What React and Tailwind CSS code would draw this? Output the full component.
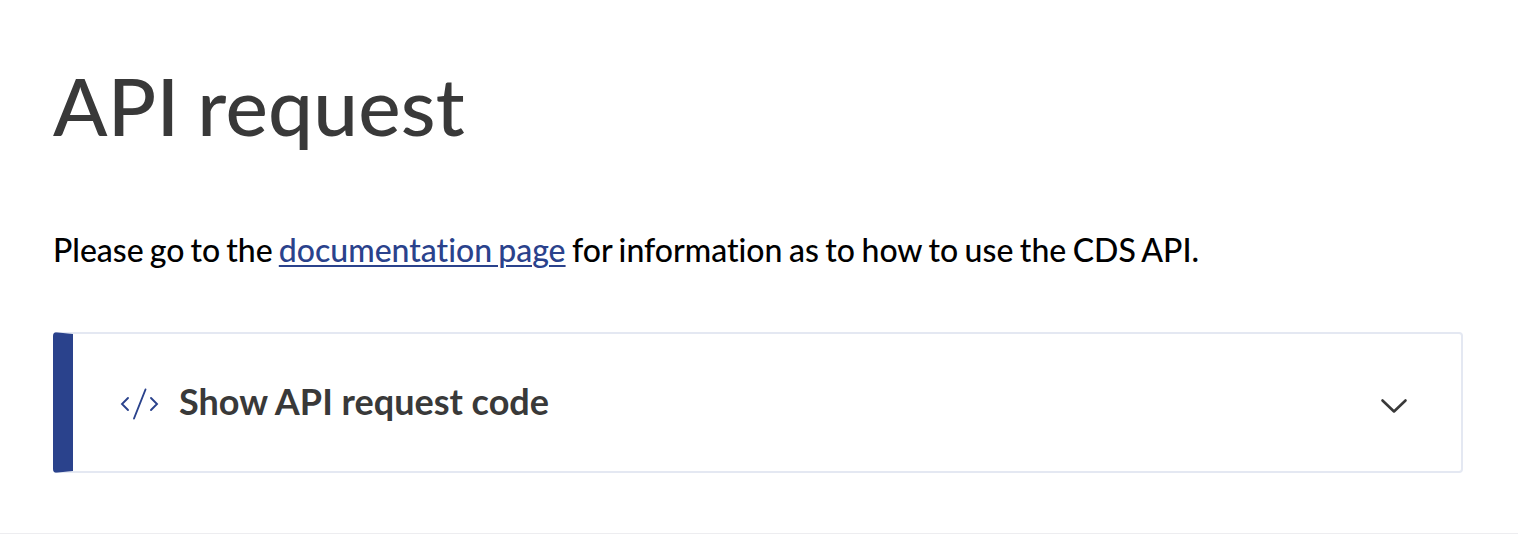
export default function App() {
  return (
    <main className="h-[534px] border-b border-[#ededf0] bg-white px-[53px] pt-[57px] font-['Lato',sans-serif] [font-variant-ligatures:none]">
      <h1 className="h-[96px] whitespace-nowrap text-[80px] font-medium leading-[96px] tracking-[0.25px] text-[#393939] [word-spacing:-2.5px]">API request</h1>
      <p className="mt-[73px] h-[48px] whitespace-nowrap text-[32px] font-medium leading-[48px] text-black [word-spacing:-2px]">
        Please go to the <a href="#" className="text-[#2a428c] underline decoration-2 underline-offset-[3px]">documentation page</a>
        <span className="[word-spacing:-1.6px]"> for information as to how to use the CDS API.</span>
      </p>
      <button className="mt-[58px] flex h-[141px] w-[1410px] items-center rounded-[4px] border-2 border-l-[20px] border-[#e4e8f2] border-l-[#2a428c] pl-[47px] pr-[53.5px] text-left">
        <svg className="mt-[2px] h-[32px] w-[40px]" viewBox="0 0 40 32" fill="none" stroke="#2a428c" strokeWidth="1.9" strokeLinecap="round">
          <path d="M8 10 2 16l6 6M31 10l6 6-6 6M25.5 1.5 14 30.5" />
        </svg>
        <span className="-mt-[3px] ml-[19px] flex-1 whitespace-nowrap text-[36px] font-bold leading-[48px] text-[#393939]">Show API request code</span>
        <svg className="mt-[6px] h-[16px] w-[28px]" viewBox="0 0 28 16" fill="none" stroke="#393939" strokeWidth="2.6" strokeLinecap="round" strokeLinejoin="round">
          <path d="m2.5 2.5 11.5 11L25.5 2.5" />
        </svg>
      </button>
    </main>
  );
}
